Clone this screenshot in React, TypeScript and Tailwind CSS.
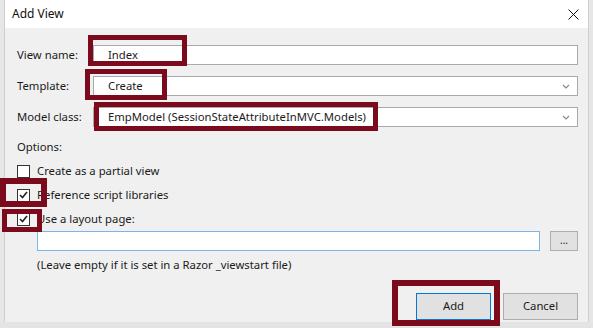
import React from "react";

const Chevron = () => (
  <svg width="8" height="5" viewBox="0 0 8 5" className="shrink-0">
    <path d="M1 1 L4 4 L7 1" fill="none" stroke="#8a8a8a" strokeWidth="1.2" />
  </svg>
);

const Check = () => (
  <svg width="9" height="8" viewBox="0 0 9 8">
    <path d="M1 4 L3.5 6.5 L8 1" fill="none" stroke="#222" strokeWidth="1.6" />
  </svg>
);

const Checkbox = ({ checked, label }: { checked?: boolean; label: string }) => (
  <div className="flex items-center h-[24px]">
    <div className="w-[13px] h-[13px] border border-[#333] bg-white flex items-center justify-center">
      {checked && <Check />}
    </div>
    <span className="ml-[7px]">{label}</span>
  </div>
);

export default function App() {
  return (
    <div
      className="relative w-[593px] h-[328px] overflow-hidden bg-[#e4e4e4] text-[11.3px] text-[#1b1b1b]"
      style={{ fontFamily: '"Noto Sans", "Open Sans", sans-serif' }}
    >
      <div className="flex h-[322px]">
        <div className="w-[5px] bg-[#e6e6e6] border-r border-[#cfcfcf]" />
        <div className="flex-1 flex flex-col">
          <div className="h-[28px] bg-white flex items-center justify-between pl-[7px] pr-[9px]">
            <span className="text-[12px] text-[#111]">Add View</span>
            <svg width="11" height="11" viewBox="0 0 11 11">
              <path d="M0.5 0.5 L10.5 10.5 M10.5 0.5 L0.5 10.5" stroke="#111" strokeWidth="1" />
            </svg>
          </div>
          <div className="flex-1 bg-[#f0f0f0] pl-[12px] pr-[10px] pt-[17px] flex flex-col">
            <div className="flex items-center h-[20px]">
              <div className="w-[76px]">View name:</div>
              <div className="flex-1 h-[20px] bg-white border border-[#a9a9a9] flex items-center pl-[14px]">Index</div>
            </div>
            <div className="flex items-center h-[20px] mt-[11px]">
              <div className="w-[76px]">Template:</div>
              <div className="flex-1 h-[20px] bg-white border border-[#a9a9a9] flex items-center justify-between pl-[14px] pr-[7px]">
                <span>Create</span>
                <Chevron />
              </div>
            </div>
            <div className="flex items-center h-[20px] mt-[11px]">
              <div className="w-[76px]">Model class:</div>
              <div className="flex-1 h-[20px] bg-white border border-[#a9a9a9] flex items-center justify-between pl-[14px] pr-[7px]">
                <span>EmpModel (SessionStateAttributeInMVC.Models)</span>
                <Chevron />
              </div>
            </div>
            <div className="mt-[10px] h-[20px] flex items-center">Options:</div>
            <div className="mt-[2px]">
              <Checkbox label="Create as a partial view" />
              <Checkbox checked label="Reference script libraries" />
              <Checkbox checked label="Use a layout page:" />
            </div>
            <div className="flex items-center pl-[20px] mt-[0px] h-[20px]">
              <div className="flex-1 h-[20px] bg-white border border-[#7eb4ea]" />
              <div className="ml-[10px] w-[28px] h-[20px] bg-[#e1e1e1] border border-[#adadad] flex items-center justify-center text-[10px] leading-none pb-[3px]">...</div>
            </div>
            <div className="pl-[20px] mt-[4px] h-[20px] flex items-center">(Leave empty if it is set in a Razor _viewstart file)</div>
            <div className="flex justify-end mt-[18px] gap-[12px]">
              <div className="w-[75px] h-[27px] bg-[#e1e1e1] border border-[#0078d7] flex items-center justify-center">Add</div>
              <div className="w-[75px] h-[27px] bg-[#e1e1e1] border border-[#adadad] flex items-center justify-center">Cancel</div>
            </div>
          </div>
        </div>
        <div className="w-[5px] bg-[#e6e6e6] border-l border-[#cfcfcf]" />
      </div>

      {/* red highlight boxes */}
      <div className="absolute left-[88px] top-[35px] w-[99px] h-[31px] border-[5px] border-[#7a0a1c]" />
      <div className="absolute left-[85px] top-[69px] w-[82px] h-[31px] border-[5px] border-[#7a0a1c]" />
      <div className="absolute left-[94px] top-[102px] w-[284px] h-[29px] border-[5px] border-[#7a0a1c]" />
      <div className="absolute left-[0px] top-[178px] w-[47px] h-[29px] border-[6px] border-[#7a0a1c]" />
      <div className="absolute left-[2px] top-[209px] w-[40px] h-[23px] border-[5px] border-[#7a0a1c]" />
      <div className="absolute left-[392px] top-[280px] w-[108px] h-[46px] border-[6px] border-[#7a0a1c]" />
    </div>
  );
}
